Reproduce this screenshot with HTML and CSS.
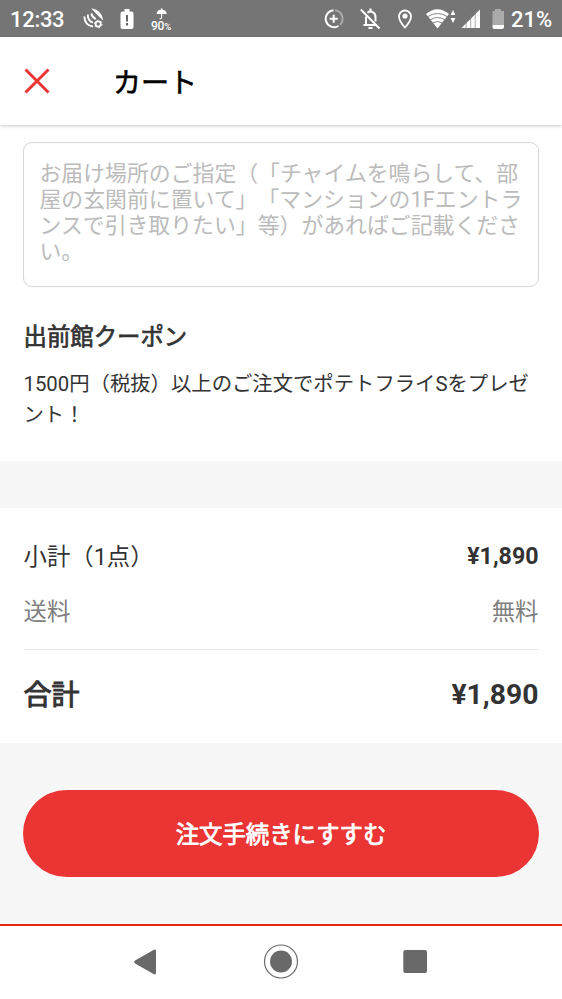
FILE: index.html
```html
<!DOCTYPE html>
<html lang="ja">
<head>
<meta charset="utf-8">
<title>カート</title>
<link rel="stylesheet" href="styles.css">
</head>
<body>
<div class="screen">
  <div class="status">
    <span class="clock">12:33</span>
    <svg class="status-icons" width="92" height="37" viewBox="82 0 92 37" fill="none" stroke="#fff" stroke-width="1.900">
      <path d="M84.300 16.500q.5 9 8.700 10M87.800 14.500q0 6.500 5 8M91.300 13.500q1 4 4.500 5.500"/>
      <path d="M93 9.300q7.500 1.700 9.300 9.500q-5-4.500-9.300-9.500z" fill="#fff" stroke-width="1.200"/>
      <circle cx="98.200" cy="24" r="2.600" stroke-width="1.700"/>
      <circle cx="98.200" cy="24" r="3.800" stroke-width="1" stroke-dasharray="1.900 2.079"/>
      <path d="M124.500 9h5v2.500h2q2 0 2 2V27q0 2-2 2h-9q-2 0-2-2V13.500q0-2 2-2h2z" fill="#fff" stroke="none"/>
      <path d="M127 15v6.500M127 23v2.500" stroke="#555" stroke-width="1.800"/>
      <path d="M156.500 14q.6-4.200 4.500-4.500V8.300h1.200v1.200q4 .3 4.600 4.500z" fill="#fff" stroke="none"/>
      <path d="M161.600 13v4.500q-.2 1.500-2 1" stroke-width="1.100"/>
      <text x="151" y="30" class="battery-small">90<tspan class="percent">%</tspan></text>
    </svg>
    <svg class="status-icons right" width="184" height="37" viewBox="322 0 184 37" fill="none" stroke="#fff" stroke-width="2">
      <path d="M333.500 10.200A8.500 8.500 0 1 0 338.500 26" />
      <path d="M335 10.300a8.500 8.500 0 0 1 5 14.500" stroke="#aaa"/>
      <path d="M333.700 14.800v8M329.700 18.800h8"/>
      <path d="M360.800 9.500l18.700 19M363.500 25h13.500M366 25v-8.500M367.500 12.700q1.300-1.200 3-1.200q5 .5 5 6v4" />
      <path d="M370.500 8.500v2.500M368.500 28h4" stroke-width="2.200"/>
      <path d="M405 27.500q-6-6.500-6-11a6 6 0 0 1 12 0q0 4.500-6 11z" stroke-width="1.800"/>
      <circle cx="405" cy="16" r="2.600" fill="#fff" stroke="none"/>
      <path d="M426 14q11.500-9.500 23 0l-11.500 14.500z" fill="#fff" stroke="none"/>
      <path d="M427 17q10.500-7 21 0M430 20q7.500-5 15 0M432.500 23q5-3 10 0" stroke="#777" stroke-width=".9"/>
      <path d="M450.500 15l2.500-5 2.500 5zM450.500 18l2.500 5 2.500-5z" fill="#fff" stroke="none"/>
      <path d="M461.500 28L480 9.500V28z" fill="#fff" stroke="none"/>
      <path d="M466.200 18v10M470.700 15v13M475.200 12v16" stroke="#888" stroke-width=".7"/>
      <path d="M495 9h6v2h3v14h-11.500V11h2.500z" fill="#aaa" stroke="none"/>
      <path d="M492.500 25H504v2q0 2-2 2h-7.500q-2 0-2-2z" fill="#fff" stroke="none"/>
    </svg>
    <span class="level">21%</span>
  </div>
  <header class="header">
    <svg class="close" width="28" height="28" viewBox="0 0 28 28"><path d="M2.500 2.500l23 23M25.500 2.500l-23 23"/></svg>
    <h1 class="title">カート</h1>
  </header>
  <main class="content">
    <div class="note">お届け場所のご指定（「チャイムを鳴らして、部<br>屋の玄関前に置いて」「マンションの1Fエントラ<br>ンスで引き取りたい」等）があればご記載くださ<br>い。</div>
    <h2 class="coupon-title">出前館クーポン</h2>
    <p class="coupon-text">1500円（税抜）以上のご注文でポテトフライSをプレゼ<br>ント！</p>
  </main>
  <section class="summary">
    <div class="row"><span>小計（1点）</span><span class="price">¥1,890</span></div>
    <div class="row fee"><span>送料</span><span>無料</span></div>
    <div class="row total"><span class="total-label">合計</span><span class="price">¥1,890</span></div>
  </section>
  <div class="action"><button class="order">注文手続きにすすむ</button></div>
  <nav class="nav">
    <svg width="562" height="73" viewBox="0 0 562 73">
      <path d="M135.500 34.300L153.500 24q2.300-1.200 2.500 1v22q-.2 2.200-2.500 1L135.500 37.700q-2.800-1.700 0-3.400z" fill="#696969"/>
      <circle cx="281" cy="35.500" r="16.500" fill="none" stroke="#696969" stroke-width="1.200"/>
      <circle cx="281" cy="35.500" r="11" fill="#696969"/>
      <rect x="403.300" y="24" width="23.700" height="23" rx="2" fill="#696969"/>
    </svg>
  </nav>
</div>
</body>
</html>
```
FILE: styles.css
```css
* { box-sizing: border-box; }
body { margin: 0; background: #fff; }
.screen {
  width: 562px;
  height: 999px;
  display: flex;
  flex-direction: column;
  overflow: hidden;
  background: #fff;
  color: #333;
  font-family: Roboto, "Noto Sans CJK JP", sans-serif;
  text-spacing-trim: space-all;
}
.status {
  height: 37px;
  flex: none;
  display: flex;
  align-items: center;
  padding: 2px 10px 0;
  background: #757575;
  color: #fff;
  font-size: 22px;
  font-weight: 500;
}
.clock { width: 72px; letter-spacing: -.3px; }
.status-icons { flex: none; margin-top: -2px; }
.status-icons.right { margin-left: auto; }
.level { width: 46px; padding-left: 5px; white-space: nowrap; }
.battery-small { font-size: 12px; font-weight: 500; fill: #fff; stroke: none; letter-spacing: -.2px; }
.percent { font-size: 9.500px; }
.header {
  height: 88px;
  flex: none;
  display: flex;
  align-items: center;
  padding-left: 23px;
  box-shadow: 0 1px 3px rgba(0, 0, 0, .22);
}
.close { fill: none; stroke: #eb3434; stroke-width: 3; }
.title {
  margin: 5px 0 0 62px;
  color: #000;
  font-size: 28px;
  line-height: 40px;
  font-weight: 400;
  -webkit-text-stroke: .6px;
}
.content { height: 336px; flex: none; padding: 17px 23.500px 0; }
.note {
  height: 145px;
  margin: 0 -.5px;
  padding: 18px 15.500px;
  border: 1.500px solid #d6d6d6;
  border-radius: 9px;
  color: #bbb;
  font-size: 21.860px;
  line-height: 26px;
  white-space: nowrap;
}
.coupon-title {
  margin: 34px 0 0;
  font-size: 23.400px;
  line-height: 32px;
  font-weight: 400;
  -webkit-text-stroke: .7px;
}
.coupon-text { margin: 16px 0 0; font-size: 20.350px; line-height: 31px; white-space: nowrap; }
.summary {
  height: 282px;
  flex: none;
  padding: 27px 23.500px 0;
  border-top: 47px solid #f7f7f7;
}
.row {
  height: 40px;
  display: flex;
  align-items: center;
  justify-content: space-between;
  font-size: 23.400px;
}
.price { font-weight: 700; font-size: 23.200px; margin-top: 1px; }
.fee { height: 75px; padding-bottom: 4px; color: #808080; border-bottom: 1.500px solid #e8e8e8; }
.total { height: 86px; font-size: 28px; }
.total .price { font-size: 28.300px; margin-top: 2px; }
.total-label { -webkit-text-stroke: 1px; }
.action { height: 181px; flex: none; padding: 47px 23px 0; background: #f7f7f7; }
.order {
  display: block;
  width: 100%;
  height: 87px;
  padding: 2px 0 0;
  border: 0;
  border-radius: 44px;
  background: #eb3434;
  color: #fff;
  font: 400 23.400px/34px Roboto, "Noto Sans CJK JP", sans-serif;
  -webkit-text-stroke: .8px;
}
.nav { height: 75px; flex: none; border-top: 2px solid #e3290f; }
```
